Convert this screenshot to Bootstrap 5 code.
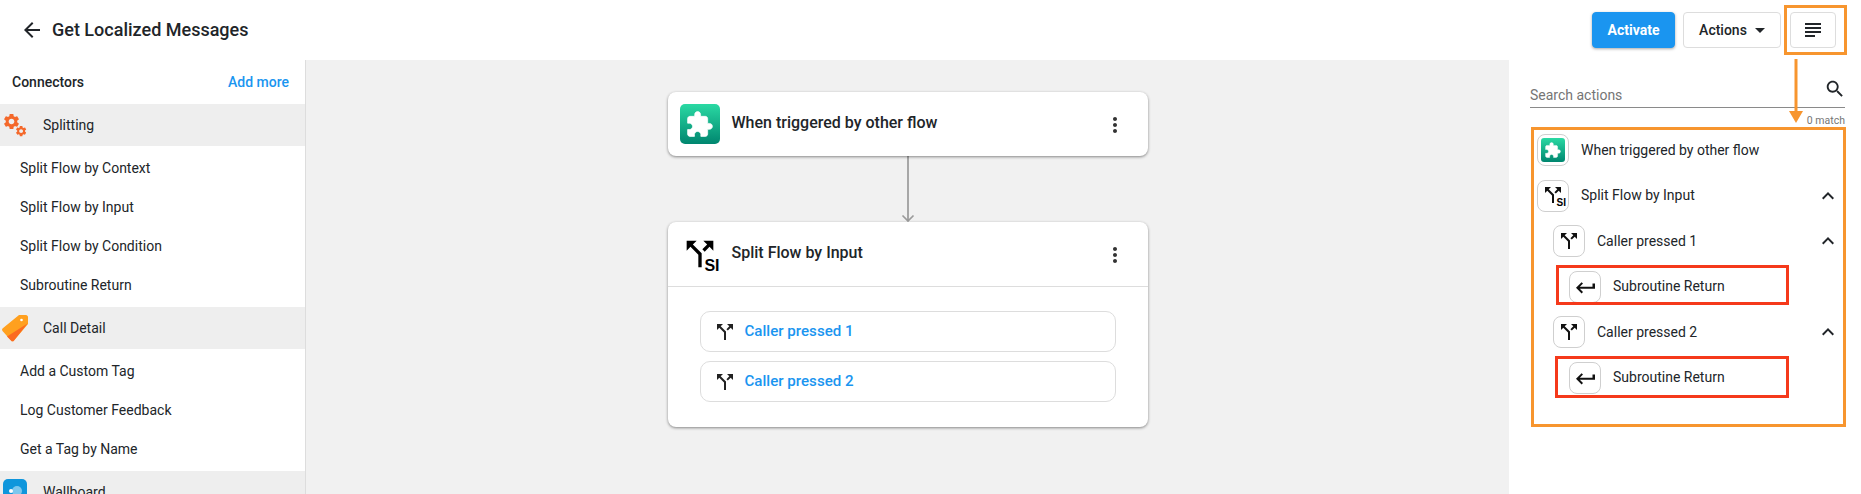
<!DOCTYPE html>
<html lang="en">
<head>
<meta charset="utf-8">
<title>Get Localized Messages</title>
<link href="https://cdn.jsdelivr.net/npm/bootstrap@5.3.0/dist/css/bootstrap.min.css" rel="stylesheet">
<style>
html,body{height:100%;}
body{font-family:Roboto,"Liberation Sans",sans-serif;color:#212529;background:#fff;overflow:hidden;position:relative;font-size:14px;}
.pg-head{height:60px;}
.pg-title{font-size:18px;font-weight:500;margin:0 0 0 8px;line-height:1;}
.back-ic{width:24px;height:24px;margin-left:20px;fill:#212529;}
.btn-act{background:#1a95f0;border-color:#1a95f0;color:#fff;font-size:14px;font-weight:700;width:83px;height:36px;padding:0;box-shadow:0 1px 3px rgba(0,0,0,.35);border-radius:4px;}
.btn-act:hover{background:#1a95f0;border-color:#1a95f0;color:#fff;}
.btn-more{border:1px solid #ddd;background:#fff;color:#212529;font-size:14px;font-weight:500;width:98px;height:36px;padding:0;border-radius:4px;margin-left:8px;}
.btn-more:after{content:"";display:inline-block;margin-left:8px;vertical-align:2px;border-top:5px solid #212529;border-left:5px solid transparent;border-right:5px solid transparent;}
.btn-outline{border:1px solid #ddd;background:#fff;width:46px;height:36px;padding:0;border-radius:4px;margin:0 25px 0 9px;}
.btn-outline svg{width:24px;height:24px;fill:#212529;}
.page-body{height:434px;}
.side-left{width:306px;flex:none;border-right:1px solid #ddd;}
.side-top{height:44px;padding:0 16px 0 12px;}
.side-top b{font-weight:500;}
.side-top a{color:#1a95f0;font-weight:500;text-decoration:none;}
.grp{height:42px;background:#eee;flex:none;}
.grp-ic{width:43px;flex:none;height:42px;}
.leaf-set{padding:2.5px 0;}
.leaf{height:39px;line-height:39px;padding-left:20px;font-size:14px;}
.canvas-area{background:#f1f1f1;padding-top:32px;min-width:0;overflow:hidden;}
.flow-card{width:480px;border:0;border-radius:8px;box-shadow:0 1px 3px rgba(0,0,0,.45);}
.flow-row{height:64px;padding:0 21px 0 12px;}
.flow-name{font-size:16px;font-weight:500;margin-left:12px;margin-top:-2px;}
.big-ic{width:40px;height:40px;flex:none;position:relative;}
.kebab{width:24px;height:24px;fill:#333;margin-top:2px;}
.wire{width:14px;height:66px;display:block;}
.flow-body{border-top:1px solid #ddd;padding:24px 32px 25px;}
.case-row{height:41px;border:1px solid #ddd;border-radius:10px;padding-left:12px;margin-bottom:9px;color:#1a95f0;font-weight:500;font-size:15.1px;}
.case-row:last-child{margin-bottom:0;}
.case-row svg{width:24px;height:24px;fill:#222;margin-right:8px;}
.side-right{width:352px;flex:none;padding:0 16px 0 21px;}
.find-row{height:48px;border-bottom:1px solid #8a8a8a;}
.find-row span{color:#757575;font-size:14px;padding-bottom:1px;}
.find-row svg{width:22px;height:22px;fill:#212529;margin:0 -1px 7px 0;}
.match-note{font-size:10.5px;color:#757575;text-align:right;line-height:12px;margin-top:7px;}
.tree{gap:13.6px;padding:7px 0 0 7px;}
.node{height:32px;}
.node-ic{width:32px;height:32px;flex:none;border:1px solid #cfcfcf;border-radius:8px;background:#fff;margin-right:12px;position:relative;}
.node-ic svg{fill:#111;}
.lvl-b{margin-left:16px;}
.lvl-c{margin-left:32px;}
.chev{width:24px;height:24px;fill:#212529;margin-left:auto;margin-right:5px;}
.si-tag{position:absolute;font-family:"Liberation Sans",sans-serif;font-weight:700;color:#000;line-height:1;}
.si-lg{font-size:16px;right:0;bottom:0;}
.si-sm{font-size:10px;right:2px;bottom:3px;}
.sp-sm{position:absolute;left:2.7px;top:2.7px;}
.mark-o{position:absolute;border:3px solid #f7952e;pointer-events:none;}
.mark-r{position:absolute;border:3px solid #f5391b;pointer-events:none;}
.mark-1{left:1784px;top:5px;width:63px;height:50px;}
.mark-2{left:1531px;top:127px;width:315px;height:300px;}
.mark-3{left:1556px;top:265px;width:233px;height:40px;}
.mark-4{left:1555px;top:356px;width:234px;height:42px;}
.mark-arrow{position:absolute;left:1787px;top:59px;width:18px;height:65px;}
</style>
</head>
<body>
<svg width="0" height="0" class="d-block position-absolute">
<defs>
<symbol id="split" viewBox="0 0 24 24"><path d="M14 4l2.29 2.29-2.88 2.88 1.42 1.42 2.88-2.88L20 10V4zm-4 0H4v6l2.29-2.29 4.71 4.7V20h2v-8.41l-5.29-5.3z"/></symbol>
<symbol id="ret" viewBox="0 0 24 24"><path d="M19.500 8.500v3.300H6.800l3.200-3.200L8.600 7.200 3 12.800l5.600 5.600 1.400-1.400-3.200-3.200H22V8.500z"/></symbol>
<symbol id="vert" viewBox="0 0 24 24"><path d="M12 8c1.1 0 2-.9 2-2s-.9-2-2-2-2 .9-2 2 .9 2 2 2zm0 2c-1.1 0-2 .9-2 2s.9 2 2 2 2-.9 2-2-.9-2-2-2zm0 6c-1.1 0-2 .9-2 2s.9 2 2 2 2-.9 2-2-.9-2-2-2z"/></symbol>
<symbol id="up" viewBox="0 0 24 24"><path d="M12 8l-6 6 1.41 1.41L12 10.83l4.59 4.58L18 14z"/></symbol>
<symbol id="gear" viewBox="0 0 24 24"><path d="M19.14 12.94c.04-.3.06-.61.06-.94 0-.32-.02-.64-.07-.94l2.03-1.58c.18-.14.23-.41.12-.61l-1.92-3.32c-.12-.22-.37-.29-.59-.22l-2.39.96c-.5-.38-1.03-.7-1.62-.94l-.36-2.54c-.04-.24-.24-.41-.48-.41h-3.84c-.24 0-.43.17-.47.41l-.36 2.54c-.59.24-1.13.57-1.62.94l-2.39-.96c-.22-.08-.47 0-.59.22L2.74 8.87c-.12.21-.08.47.12.61l2.03 1.58c-.05.3-.09.63-.09.94s.02.64.07.94l-2.03 1.58c-.18.14-.23.41-.12.61l1.92 3.32c.12.22.37.29.59.22l2.39-.96c.5.38 1.03.7 1.62.94l.36 2.54c.05.24.24.41.48.41h3.84c.24 0 .44-.17.47-.41l.36-2.54c.59-.24 1.13-.56 1.62-.94l2.39.96c.22.08.47 0 .59-.22l1.92-3.32c.12-.22.07-.47-.12-.61l-2.01-1.58zM12 15.6c-1.98 0-3.6-1.62-3.6-3.6s1.62-3.6 3.6-3.6 3.6 1.62 3.6 3.6-1.62 3.6-3.6 3.6z"/></symbol>
<linearGradient id="gr" x1="0" y1="0" x2="0" y2="1"><stop offset="0" stop-color="#2ad9a3"/><stop offset="1" stop-color="#00866f"/></linearGradient>
<symbol id="puzzle" viewBox="0 0 40 40"><rect width="40" height="40" rx="5" fill="url(#gr)"/><path fill="#fff" stroke="#fff" stroke-width=".6" stroke-linejoin="round" transform="translate(5.250 6.430) scale(1.18)" d="M20.500 11H19V7c0-1.100-.9-2-2-2h-4V3.500C13 2.120 11.880 1 10.500 1S8 2.120 8 3.500V5H4c-1.100 0-1.990.9-1.990 2v3.800H3.500c1.490 0 2.700 1.210 2.700 2.700s-1.210 2.700-2.700 2.700H2V20c0 1.100.9 2 2 2h3.800v-1.500c0-1.490 1.210-2.700 2.700-2.700 1.490 0 2.700 1.210 2.700 2.700V22H17c1.100 0 2-.9 2-2v-4h1.500c1.380 0 2.500-1.120 2.500-2.500S21.880 11 20.500 11z"/></symbol>
</defs>
</svg>

<header class="pg-head d-flex align-items-center">
  <svg class="back-ic" viewBox="0 0 24 24"><path d="M20 11H7.830l5.590-5.590L12 4l-8 8 8 8 1.410-1.410L7.830 13H20v-2z"/></svg>
  <h1 class="pg-title">Get Localized Messages</h1>
  <div class="ms-auto d-flex align-items-center">
    <button type="button" class="btn btn-act">Activate</button>
    <button type="button" class="btn btn-more">Actions</button>
    <button type="button" class="btn btn-outline d-flex align-items-center justify-content-center"><svg viewBox="0 0 24 24"><path d="M14 17H4v2h10v-2zm6-8H4v2h16V9zM4 15h16v-2H4v2zM4 5v2h16V5H4z"/></svg></button>
  </div>
</header>

<main class="page-body d-flex">
  <aside class="side-left overflow-hidden">
    <div class="side-top d-flex justify-content-between align-items-center"><b>Connectors</b><a href="#">Add more</a></div>
    <div class="grp d-flex align-items-center">
      <div class="grp-ic">
        <svg width="43" height="42" viewBox="0 0 43 42"><use href="#gear" x="2" y="8" width="19" height="19" fill="#f4682a"/><use href="#gear" x="14.600" y="20.600" width="13" height="13" fill="#f4682a"/></svg>
      </div><span>Splitting</span>
    </div>
    <div class="leaf-set">
      <div class="leaf">Split Flow by Context</div>
      <div class="leaf">Split Flow by Input</div>
      <div class="leaf">Split Flow by Condition</div>
      <div class="leaf">Subroutine Return</div>
    </div>
    <div class="grp d-flex align-items-center">
      <div class="grp-ic">
        <svg width="43" height="42" viewBox="0 0 43 42"><path d="M2.500 21.500 19 8h7c1 0 2 1 2 2v7L14 33.500a2 2 0 0 1-3 0L2.500 24a2 2 0 0 1 0-2.500z" fill="#ffa01f"/><path d="M27.500 16.500 14 33.500a2 2 0 0 1-3 0L7 29.500z" fill="#fb6a21"/><circle cx="21.500" cy="13" r="1.300" fill="#fff"/></svg>
      </div><span>Call Detail</span>
    </div>
    <div class="leaf-set">
      <div class="leaf">Add a Custom Tag</div>
      <div class="leaf">Log Customer Feedback</div>
      <div class="leaf">Get a Tag by Name</div>
    </div>
    <div class="grp d-flex align-items-center">
      <div class="grp-ic">
        <svg width="43" height="42" viewBox="0 0 43 42"><rect x="3" y="8" width="24" height="24" rx="5" fill="#0f96dc"/><circle cx="17" cy="20" r="5" fill="#7cc7ee"/><circle cx="11" cy="20" r="2" fill="#fff"/></svg>
      </div><span>Wallboard</span>
    </div>
  </aside>

  <section class="canvas-area flex-grow-1 d-flex flex-column align-items-center">
    <div class="card flow-card">
      <div class="flow-row d-flex align-items-center">
        <svg class="big-ic"><use href="#puzzle"/></svg>
        <span class="flow-name">When triggered by other flow</span>
        <svg class="kebab ms-auto"><use href="#vert"/></svg>
      </div>
    </div>
    <svg class="wire" viewBox="0 0 14 66"><path d="M7 0v65M1.500 59.500 7 65l5.500-5.500" fill="none" stroke="#9b9b9b" stroke-width="1.700"/></svg>
    <div class="card flow-card">
      <div class="flow-row d-flex align-items-center">
        <div class="big-ic"><svg width="40" height="40" class="d-block"><use href="#split"/></svg><span class="si-tag si-lg">SI</span></div>
        <span class="flow-name">Split Flow by Input</span>
        <svg class="kebab ms-auto"><use href="#vert"/></svg>
      </div>
      <div class="flow-body">
        <div class="case-row d-flex align-items-center"><svg><use href="#split"/></svg>Caller pressed 1</div>
        <div class="case-row d-flex align-items-center"><svg><use href="#split"/></svg>Caller pressed 2</div>
      </div>
    </div>
  </section>

  <aside class="side-right">
    <div class="find-row d-flex justify-content-between align-items-end">
      <span>Search actions</span>
      <svg viewBox="0 0 24 24"><path d="M15.500 14h-.79l-.28-.27C15.410 12.590 16 11.110 16 9.500 16 5.910 13.090 3 9.500 3S3 5.910 3 9.500 5.910 16 9.500 16c1.610 0 3.090-.59 4.230-1.570l.27.28v.79l5 4.990L20.490 19l-4.990-5zm-6 0C7.010 14 5 11.990 5 9.500S7.010 5 9.500 5 14 7.010 14 9.500 11.990 14 9.500 14z"/></svg>
    </div>
    <div class="match-note">0 match</div>
    <div class="tree d-flex flex-column">
      <div class="node d-flex align-items-center"><div class="node-ic d-flex align-items-center justify-content-center"><svg width="24" height="24"><use href="#puzzle"/></svg></div>When triggered by other flow</div>
      <div class="node d-flex align-items-center"><div class="node-ic"><svg width="24" height="24" class="sp-sm"><use href="#split"/></svg><span class="si-tag si-sm">SI</span></div>Split Flow by Input<svg class="chev"><use href="#up"/></svg></div>
      <div class="node lvl-b d-flex align-items-center"><div class="node-ic d-flex align-items-center justify-content-center"><svg width="24" height="24"><use href="#split"/></svg></div>Caller pressed 1<svg class="chev"><use href="#up"/></svg></div>
      <div class="node lvl-c d-flex align-items-center"><div class="node-ic d-flex align-items-center justify-content-center"><svg width="24" height="24"><use href="#ret"/></svg></div>Subroutine Return</div>
      <div class="node lvl-b d-flex align-items-center"><div class="node-ic d-flex align-items-center justify-content-center"><svg width="24" height="24"><use href="#split"/></svg></div>Caller pressed 2<svg class="chev"><use href="#up"/></svg></div>
      <div class="node lvl-c d-flex align-items-center"><div class="node-ic d-flex align-items-center justify-content-center"><svg width="24" height="24"><use href="#ret"/></svg></div>Subroutine Return</div>
    </div>
  </aside>
</main>

<div class="mark-o mark-1"></div>
<div class="mark-o mark-2"></div>
<div class="mark-r mark-3"></div>
<div class="mark-r mark-4"></div>
<svg class="mark-arrow" viewBox="0 0 18 65"><path d="M9 0v54" stroke="#f7952e" stroke-width="3"/><path d="M2 52h14l-7 12z" fill="#f7952e"/></svg>
<script src="https://cdn.jsdelivr.net/npm/bootstrap@5.3.0/dist/js/bootstrap.bundle.min.js"></script>
</body>
</html>
